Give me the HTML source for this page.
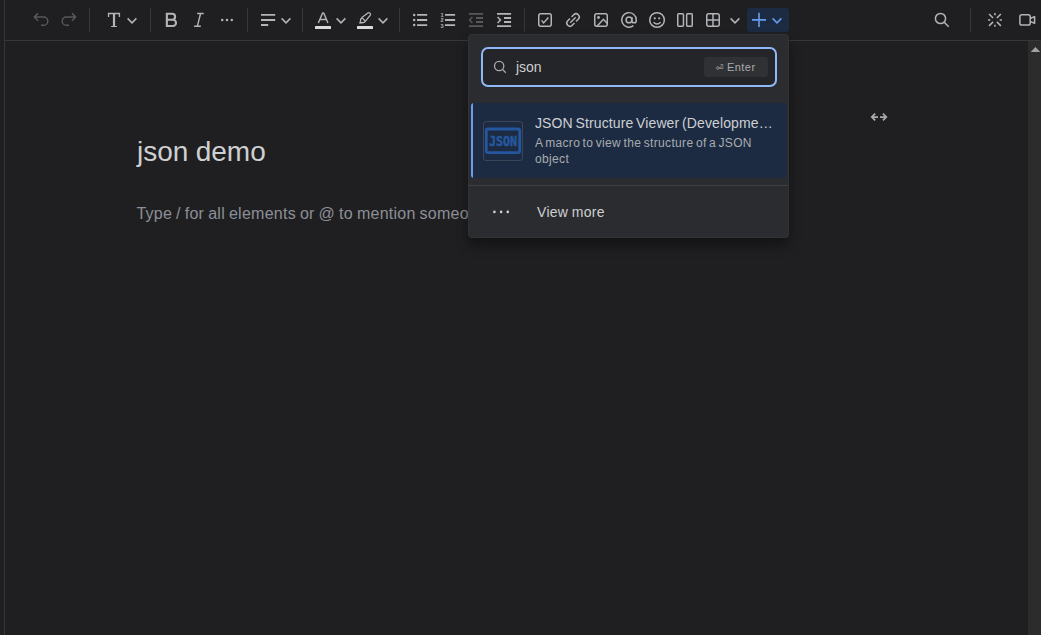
<!DOCTYPE html>
<html lang="en">
<head>
<meta charset="utf-8">
<title>json demo</title>
<style>
html,body{margin:0;padding:0;}
body{width:1041px;height:635px;overflow:hidden;background:#1f1f21;position:relative;
  font-family:"Liberation Sans",sans-serif;color:#cecfd2;}
.abs{position:absolute;}
#leftline{left:4px;top:0;width:1px;height:635px;background:#37373a;}
#topline{left:5px;top:40px;width:1036px;height:1px;background:#37373a;}
#scroll{left:1028px;top:41px;width:13px;height:594px;background:#2c2c2c;}
#toolbar{left:0;top:0;width:1041px;height:40px;}
#title{left:137px;top:134px;font-size:28px;line-height:36px;color:#cecfd2;white-space:nowrap;letter-spacing:0.013px;word-spacing:-0.56px;}
#ph{left:136.4px;top:202px;font-size:16px;line-height:24px;color:#8c8f97;white-space:nowrap;letter-spacing:0.25px;word-spacing:-0.695px;}
#popup{left:468px;top:34px;width:321px;height:204px;background:#2b2c2f;border-radius:4px;
  box-shadow:inset 0 0 0 1px rgba(189,189,189,0.05),0 8px 12px rgba(1,4,4,0.36),0 0 1px rgba(1,4,4,0.5);}
#input{left:13px;top:13px;width:292px;height:36px;border:2px solid #8fb8f6;border-radius:7px;background:#242528;}
#q{left:48px;top:24px;font-size:14px;line-height:18px;color:#cecfd2;letter-spacing:-0.08px;}
#enter{left:236px;top:23px;width:64px;height:20px;border-radius:3px;background:#303134;}
#entertxt{left:259px;top:24px;font-size:11px;line-height:18px;color:#a9abaf;white-space:nowrap;letter-spacing:0.45px;}
#entersym{left:247.5px;top:25px;font-size:9.6px;line-height:18px;color:#a9abaf;font-family:"DejaVu Sans","Liberation Sans",sans-serif;}
#item{left:3px;top:69px;width:316px;height:75px;background:#1c2b42;border-radius:3px;overflow:hidden;}
#item:before{content:"";position:absolute;left:0;top:0;width:2px;height:75px;background:#669df1;}
#iconbox{left:15px;top:87px;width:38px;height:38px;border:1px solid #3c4657;border-radius:3px;}
#ititle{left:67px;top:79px;width:240px;font-size:14px;line-height:20px;color:#cecfd2;white-space:nowrap;letter-spacing:0.113px;word-spacing:-1.267px;}
#idesc{left:67px;top:101px;width:250px;white-space:nowrap;font-size:12px;line-height:16px;color:#a9abaf;letter-spacing:0.34px;word-spacing:-1.225px;}
#divider{left:0;top:151px;width:321px;height:1px;background:#3f4043;}
#more{left:69px;top:168px;font-size:14px;line-height:20px;color:#cecfd2;white-space:nowrap;letter-spacing:0.291px;word-spacing:-0.66px;}
</style>
</head>
<body>
<div id="leftline" class="abs"></div>
<div id="topline" class="abs"></div>
<div id="scroll" class="abs"><svg width="13" height="20" viewBox="1028 41 13 20" style="display:block"><path d="M1030.7 52.1L1035.45 46.9L1040.2 52.1Z" fill="#a1a1a1"/></svg></div>

<svg id="toolbar" class="abs" viewBox="0 0 1041 40" width="1041" height="40" fill="none" stroke-linecap="butt" stroke-linejoin="round">
<path d="M89.5 8V32" stroke="#37373a" stroke-width="1"/>
<path d="M150.5 8V32" stroke="#37373a" stroke-width="1"/>
<path d="M247.5 8V32" stroke="#37373a" stroke-width="1"/>
<path d="M302.5 8V32" stroke="#37373a" stroke-width="1"/>
<path d="M399.5 8V32" stroke="#37373a" stroke-width="1"/>
<path d="M524.5 8V32" stroke="#37373a" stroke-width="1"/>
<path d="M970.5 8V32" stroke="#37373a" stroke-width="1"/>
<g stroke="#56585c" stroke-width="1.5"><path d="M41 25.25H43.7a4.1 4.1 0 0 0 0-8.2H34.7M38 13.4L34.3 17.05L38 20.7"/><path d="M69 25.25H66.3a4.1 4.1 0 0 1 0-8.2H75.3M72 13.4L75.7 17.05L72 20.7"/></g>
<path fill="#b2b4b8" d="M107.9 12.8H120.1V16.9H118.8V14.3H115.1V26H116.9V27.1H111.1V26H112.9V14.3H109.2V16.9H107.9Z"/>
<path d="M127.6 18.4L132 22.85L136.4 18.4" stroke="#b2b4b8" stroke-width="1.5" stroke-linejoin="miter"/>
<path d="M281.6 18.4L286 22.85L290.4 18.4" stroke="#b2b4b8" stroke-width="1.5" stroke-linejoin="miter"/>
<path d="M336.6 18.4L341 22.85L345.4 18.4" stroke="#b2b4b8" stroke-width="1.5" stroke-linejoin="miter"/>
<path d="M378.6 18.4L383 22.85L387.4 18.4" stroke="#b2b4b8" stroke-width="1.5" stroke-linejoin="miter"/>
<path d="M730.6 18.4L735 22.85L739.4 18.4" stroke="#b2b4b8" stroke-width="1.5" stroke-linejoin="miter"/>
<path stroke="#b2b4b8" stroke-width="2.1" stroke-linejoin="miter" d="M166.85 12.8V27M165.8 13.8H172.1a3 3 0 0 1 0 6H166.8M172.1 19.8H172.9a3.1 3.1 0 0 1 0 6.2H165.8"/>
<path stroke="#b2b4b8" stroke-width="1.4" d="M197.2 13.5H203.7M194.1 26.3H200.8M200.6 13.5L197.3 26.3"/>
<g fill="#b2b4b8"><circle cx="222.2" cy="20" r="1.25"/><circle cx="227" cy="20" r="1.25"/><circle cx="231.8" cy="20" r="1.25"/></g>
<path stroke="#b2b4b8" stroke-width="1.8" d="M261 14.9H275.2M261 20H275.2M261 25H268.2"/>
<path stroke="#b2b4b8" stroke-width="1.45" stroke-linejoin="round" d="M318.35 23L322.6 13H323.7L327.95 23M320.2 19.55H326.1"/>
<rect x="315" y="26" width="16" height="3" rx="0.5" fill="#d9dadd"/>
<rect x="357" y="26" width="16" height="3" rx="0.5" fill="#d9dadd"/>
<path stroke="#b2b4b8" stroke-width="1.3" d="M361.9 17.6L368.2 12.8Q369 12.3 369.6 12.9L370.3 13.7Q370.8 14.4 370.3 15.1L365.5 21.2M361.9 17.6Q360.1 18.9 360.4 21.7L359.8 23L361.2 22.7Q364.4 23 365.5 21.2M361.9 17.6L365.5 21.2"/>
<g fill="#b2b4b8"><circle cx="414.2" cy="14.9" r="1.25"/><circle cx="414.2" cy="20" r="1.25"/><circle cx="414.2" cy="25.1" r="1.25"/></g>
<path stroke="#b2b4b8" stroke-width="1.8" d="M417 14.9H427.2M417 20H427.2M417 25.1H427.2"/>
<path stroke="#b2b4b8" stroke-width="1.8" d="M445 14.9H455.1M445 20H455.1M445 25.1H455.1"/>
<g fill="#b2b4b8" font-family="Liberation Sans, sans-serif" font-weight="bold" font-size="5.6" text-anchor="middle"><text x="442" y="17">1</text><text x="442" y="22.4">2</text><text x="442" y="27.7">3</text></g>
<path stroke="#56585c" stroke-width="1.8" stroke-linejoin="miter" d="M469 13.85H483M476 18H483M476 22H483M469 26.1H483"/>
<path stroke="#56585c" stroke-width="1.5" stroke-linejoin="miter" d="M472.4 17L469.6 20L472.4 23"/>
<path stroke="#b2b4b8" stroke-width="1.8" stroke-linejoin="miter" d="M497 13.85H511.1M504 18H511.1M504 22H511.1M497 26.1H511.1"/>
<path stroke="#b2b4b8" stroke-width="1.5" stroke-linejoin="miter" d="M497.6 17L500.5 20L497.6 23"/>
<rect x="538.75" y="13.7" width="12.5" height="12.5" rx="2" stroke="#b2b4b8" stroke-width="1.5"/>
<path stroke="#b2b4b8" stroke-width="1.5" stroke-linejoin="miter" d="M541.6 20.4L543.6 22.9L548.4 17.5"/>
<g transform="rotate(-45 573 20) translate(573 20)" stroke="#b2b4b8" stroke-width="1.5"><path d="M-1.06 -3.18H-4.24a3.18 3.18 0 0 0 0 6.36H-1.06"/><path d="M1.06 3.18H4.24a3.18 3.18 0 0 0 0 -6.36H1.06"/><path d="M-3.89 0H3.89"/></g>
<rect x="594.75" y="13.7" width="12.5" height="12.5" rx="2" stroke="#b2b4b8" stroke-width="1.5"/>
<circle cx="598.5" cy="17.5" r="1.4" fill="#b2b4b8"/>
<path stroke="#b2b4b8" stroke-width="1.5" stroke-linejoin="miter" d="M597.2 26L603.4 19.3L607.3 23.4"/>
<g transform="translate(620.3 11.2) scale(0.725)" stroke="#b2b4b8" stroke-width="2.05"><circle cx="12" cy="12" r="4"/><path d="M16 8v5a3 3 0 0 0 6 0v-1a10 10 0 1 0-3.92 7.94"/></g>
<circle cx="657.05" cy="19.95" r="7.3" stroke="#b2b4b8" stroke-width="1.5"/>
<circle cx="654.8" cy="18.3" r="1.1" fill="#b2b4b8"/><circle cx="659.2" cy="18.3" r="1.1" fill="#b2b4b8"/>
<path stroke="#b2b4b8" stroke-width="1.5" d="M653.6 22.2Q657 25.8 660.5 22.2"/>
<rect x="677.75" y="13.85" width="5.7" height="12.3" rx="0.8" stroke="#b2b4b8" stroke-width="1.5"/>
<rect x="686.65" y="13.85" width="5.6" height="12.3" rx="0.8" stroke="#b2b4b8" stroke-width="1.5"/>
<rect x="706.75" y="13.65" width="12.5" height="12.5" rx="2" stroke="#b2b4b8" stroke-width="1.5"/>
<path stroke="#b2b4b8" stroke-width="1.5" d="M713 13.6V26.2M706.7 19.9H719.3"/>
<rect x="747" y="8" width="42" height="24" rx="3" fill="#1c2b42"/>
<path stroke="#669df1" stroke-width="1.6" d="M752 19.9H766.1M759 12.8V27"/>
<path d="M772.6 18.4L777 22.85L781.4 18.4" stroke="#669df1" stroke-width="1.5" stroke-linejoin="miter"/>
<circle cx="940.5" cy="18.5" r="5.1" stroke="#b2b4b8" stroke-width="1.5"/>
<path stroke="#b2b4b8" stroke-width="1.5" d="M944.2 22.2L948.7 26.7"/>
<path stroke="#b2b4b8" stroke-width="1.5" d="M993.05 18.05L989.05 14.05M993.05 21.85L989.05 25.85M996.85 18.05L1000.85 14.05M996.85 21.85L1000.85 25.85M994.95 13.049999999999999V15.25M994.95 24.65V26.85M988.0500000000001 19.95H990.25M999.6500000000001 19.95H1001.85"/>
<rect x="1019.9" y="14.85" width="10.3" height="10.2" rx="1.8" stroke="#b2b4b8" stroke-width="1.5"/>
<path stroke="#b2b4b8" stroke-width="1.5" d="M1030.6 18.3L1034.6 16.6V23.3L1030.6 21.6"/>
</svg>

<div id="title" class="abs">json demo</div>
<div id="ph" class="abs">Type / for all elements or @ to mention someone</div>

<svg class="abs" style="left:866px;top:108px" width="26" height="18" viewBox="866 108 26 18" fill="none" stroke="#a9abaf" stroke-width="1.75">
<path d="M878 117H872M875.2 113.6L871.8 117L875.2 120.4"/>
<path d="M880 117H886.1M882.9 113.6L886.3 117L882.9 120.4"/>
</svg>

<div id="popup" class="abs">
  <div id="input" class="abs"></div>
  <svg class="abs" style="left:22px;top:24px" width="20" height="20" viewBox="490 58 20 20" fill="none" stroke="#a9abaf" stroke-width="1.3"><circle cx="499.15" cy="66" r="4.65"/><path d="M502.5 69.4L505.8 72.8"/></svg>
  <div id="q" class="abs">json</div>
  <div id="enter" class="abs"></div>
  <div id="entersym" class="abs">⏎</div>
  <div id="entertxt" class="abs">Enter</div>
  <div id="item" class="abs"></div>
  <div id="iconbox" class="abs"></div>
  <svg class="abs" style="left:15px;top:87px" width="40" height="40" viewBox="483 121 40 40">
    <rect x="486.3" y="129" width="33.4" height="23.7" rx="1.6" fill="none" stroke="#25579f" stroke-width="2.8"/>
    <text x="503" y="145.9" text-anchor="middle" font-family="'DejaVu Sans Mono','Liberation Mono',monospace" font-weight="bold" font-size="13.7" fill="#25579f" stroke="#25579f" stroke-width="0.55" textLength="28.2" lengthAdjust="spacingAndGlyphs">JSON</text>
  </svg>
  <div id="ititle" class="abs">JSON Structure Viewer (Developme…</div>
  <div id="idesc" class="abs">A macro to view the structure of a JSON<br>object</div>
  <div id="divider" class="abs"></div>
  <svg class="abs" style="left:20px;top:172px" width="28" height="12" viewBox="488 206 28 12" fill="#d3d4d7"><circle cx="494.4" cy="211.9" r="1.3"/><circle cx="501.1" cy="211.9" r="1.3"/><circle cx="507.8" cy="211.9" r="1.3"/></svg>
  <div id="more" class="abs">View more</div>
</div>
</body>
</html>
